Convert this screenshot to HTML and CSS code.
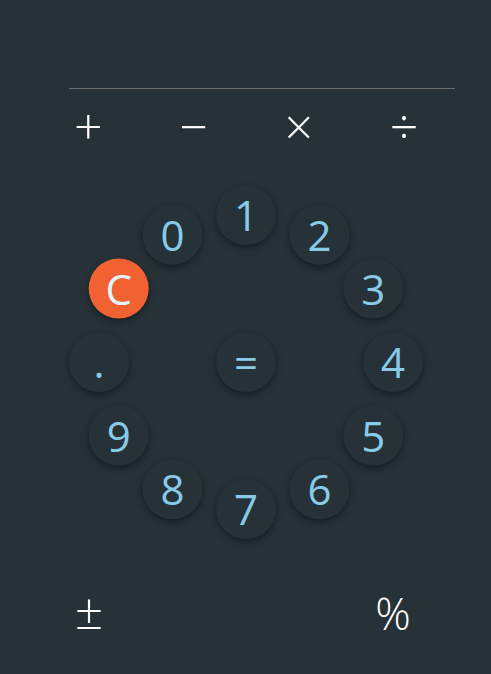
FILE: index.html
```html
<!DOCTYPE html>
<html lang="en">
<head>
<meta charset="utf-8">
<title>Calculator</title>
<link rel="stylesheet" href="styles.css">
</head>
<body>
<div class="calc">
  <div class="display"></div>
  <div class="ops">
    <button class="op">+</button>
    <button class="op">−</button>
    <button class="op">×</button>
    <button class="op">÷</button>
  </div>
  <div class="dial">
    <button class="key k0">1</button>
    <button class="key k1">2</button>
    <button class="key k2">3</button>
    <button class="key k3">4</button>
    <button class="key k4">5</button>
    <button class="key k5">6</button>
    <button class="key k6">7</button>
    <button class="key k7">8</button>
    <button class="key k8">9</button>
    <button class="key k9">.</button>
    <button class="key k10 clear">C</button>
    <button class="key k11">0</button>
    <button class="key equals">=</button>
  </div>
  <div class="bottom">
    <button class="op small pm">±</button>
    <button class="op small pct">%</button>
  </div>
</div>
</body>
</html>
```
FILE: styles.css
```css
html, body {
  margin: 0;
  padding: 0;
  background: #263238;
}
body {
  font-family: "Open Sans", "Noto Sans", sans-serif;
  width: 491px;
  height: 674px;
  overflow: hidden;
}
button {
  font-family: inherit;
  border: none;
  background: none;
  padding: 0;
  margin: 0;
  cursor: pointer;
}
.calc {
  display: flex;
  flex-direction: column;
}
.display {
  height: 88px;
  margin: 0 36px 0 69px;
  border-bottom: 1px solid #6e6e6e;
}
.ops {
  display: grid;
  grid-template-columns: repeat(4, 105.3px);
  margin-left: 35.5px;
  height: 74px;
  align-items: center;
}
.op {
  color: #ffffff;
  font-size: 50px;
  font-weight: 300;
  line-height: 1;
  text-align: center;
}
.dial {
  position: relative;
  height: 422px;
}
.key {
  --a: 0deg;
  position: absolute;
  left: 216px;
  top: 169px;
  width: 60px;
  height: 60px;
  border-radius: 50%;
  background: #263238;
  box-shadow: 0 3px 7px rgba(0, 0, 0, 0.42);
  color: #88cbe8;
  font-size: 42px;
  line-height: 1;
  display: flex;
  align-items: center;
  justify-content: center;
  transform: rotate(var(--a)) translateY(-147px) rotate(calc(-1 * var(--a)));
}
.equals { transform: none; }
.k0 { --a: 0deg; }
.k1 { --a: 30deg; }
.k2 { --a: 60deg; }
.k3 { --a: 90deg; }
.k4 { --a: 120deg; }
.k5 { --a: 150deg; }
.k6 { --a: 180deg; }
.k7 { --a: 210deg; }
.k8 { --a: 240deg; }
.k9 { --a: 270deg; }
.k10 { --a: 300deg; }
.k11 { --a: 330deg; }
.clear {
  background: #f26131;
  color: #e1f5fe;
}
.bottom {
  display: flex;
  justify-content: space-between;
  padding: 0 72px 0 63px;
  height: 50px;
  align-items: center;
}
.small {
  width: 52px;
}
.pm {
  font-size: 50px;
}
.pct {
  font-size: 44px;
  padding-top: 6px;
}
```
